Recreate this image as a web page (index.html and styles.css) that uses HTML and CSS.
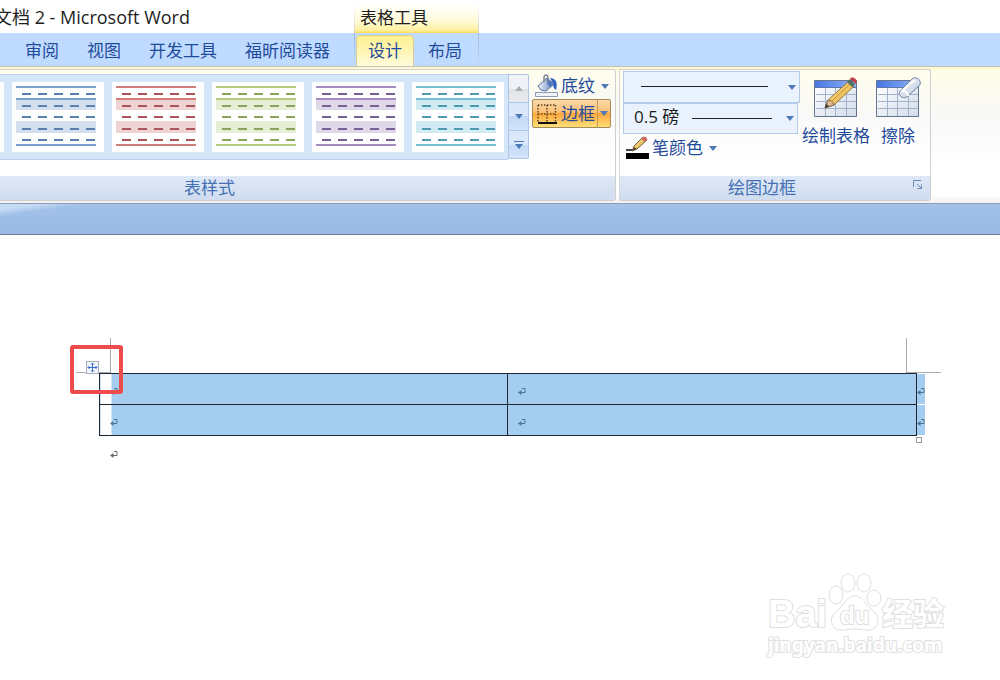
FILE: index.html
```html
<!DOCTYPE html>
<html lang="zh-CN">
<head>
  <meta charset="UTF-8" />
  <meta name="viewport" content="width=device-width, initial-scale=1.0" />
  <title>文档 2 - Microsoft Word</title>
  <link rel="stylesheet" href="styles.css">
</head>
<body>
  <header class="top">
    <h1 class="doc-title"><span>文档 2 - Microsoft Word</span></h1>
    <div class="context-title">表格工具</div>
    <nav class="tabs">
      <button class="tab">审阅</button>
      <button class="tab">视图</button>
      <button class="tab">开发工具</button>
      <button class="tab">福昕阅读器</button>
    </nav>
    <nav class="context-tabs">
      <button class="tab active">设计</button>
      <button class="tab">布局</button>
    </nav>
  </header>

  <svg class="defs" width="0" height="0" aria-hidden="true">
    <defs>
      <linearGradient id="head" x1="0" x2="1"><stop offset="0" stop-color="#4a77e0"/><stop offset="1" stop-color="#8db4fb"/></linearGradient>
      <linearGradient id="cell" x1="0" y1="0" x2="1" y2="1"><stop offset="0" stop-color="#fff"/><stop offset="1" stop-color="#d3dcea"/></linearGradient>
      <linearGradient id="pencil" x1="0" y1="0" x2="1" y2="1"><stop offset="0" stop-color="#fff0a0"/><stop offset="1" stop-color="#e0a030"/></linearGradient>
      <linearGradient id="rubber" x1="0" y1="0" x2="1" y2="1"><stop offset="0" stop-color="#fff"/><stop offset="1" stop-color="#b4c3dc"/></linearGradient>
      <linearGradient id="bucket" x1="0" x2="1"><stop offset="0" stop-color="#f4f8ff"/><stop offset="1" stop-color="#5f7db8"/></linearGradient>
    </defs>
    <symbol id="style" viewBox="0 0 92 70">
      <path class="band" d="M4 17h80v11H4zM4 39h80v12H4z"/>
      <path class="rule" d="M4 5h80M4 63h80" stroke-width="2"/>
      <path class="rule" d="M4 17h80" stroke-width="2"/>
      <path class="dash" d="M10 12h76M10 24h76M10 35h76M10 47h76M10 58h76" stroke-width="2" stroke-dasharray="9 7"/>
    </symbol>
    <symbol id="grid" viewBox="0 0 46 42">
      <path d="M2 4h42v36H2z" fill="url(#cell)"/>
      <path d="M2 4h42v6H2z" fill="url(#head)"/>
      <path d="M3 17.500h40M3 24.500h40M3 31.500h40M12.500 10v29M22.500 10v29M33.500 10v29" stroke="#a3b1c9" fill="none"/>
      <path d="M1.500 3.500h42v36h-42z" fill="none" stroke="#66758f"/>
      <path d="M2 10.500h41" stroke="#5b78b5"/>
    </symbol>
    <symbol id="down" viewBox="0 0 8 5"><path d="M0 0h8L4 5z"/></symbol>
    <symbol id="mark" viewBox="0 0 8 8"><path d="M4 .5h3v4H1" fill="none" stroke="currentColor"/><path d="M0 4.500L3.500 2v5z" fill="currentColor"/></symbol>
  </svg>

  <main>
    <div class="ribbon">
      <section class="group">
        <div class="group-body">
          <div class="gallery">
            <button class="style-item blue" aria-label="样式 1"><svg><use href="#style"/></svg></button>
            <button class="style-item blue" aria-label="样式 2"><svg><use href="#style"/></svg></button>
            <button class="style-item red" aria-label="样式 3"><svg><use href="#style"/></svg></button>
            <button class="style-item green" aria-label="样式 4"><svg><use href="#style"/></svg></button>
            <button class="style-item purple" aria-label="样式 5"><svg><use href="#style"/></svg></button>
            <button class="style-item teal" aria-label="样式 6"><svg><use href="#style"/></svg></button>
          </div>
          <div class="scroller">
            <button class="off" aria-label="上一行"><svg width="8" height="5"><path d="M0 5h8L4 0z"/></svg></button>
            <button aria-label="下一行"><svg width="8" height="5"><use href="#down"/></svg></button>
            <button aria-label="其他"><svg width="10" height="8"><path d="M0 0h10v1H0zM1 3h8L5 8z"/></svg></button>
          </div>
          <div class="commands">
            <button class="cmd">
              <svg width="24" height="24" viewBox="0 0 24 24">
                <path d="M.5 18.500h22v4H.500z" fill="#eef3fb" stroke="#8d9bb5"/>
                <path d="M15 4c6 0 8 5 6 12-2-1-3-3-3-7z" fill="#2f62c4"/>
                <path d="M3 12 12 4l7 6-8 7-5-1z" fill="url(#bucket)" stroke="#5a6f9d"/>
                <path d="M12 4l7 6-4 3c-3-2-4-5-3-9z" fill="#5479bd"/>
                <path d="M9 8V4c0-4 4-4 4 0v5" fill="none" stroke="#7b8798" stroke-width="1.500"/>
              </svg>
              <span>底纹</span>
              <svg class="arrow"><use href="#down"/></svg>
            </button>
            <button class="cmd pressed">
              <svg width="24" height="24" viewBox="0 0 24 24">
                <path d="M3 3h18M3 12h18M3 3v17M12 3v17M20.500 3v17" fill="none" stroke="#5f4a2c" stroke-width="1.500" stroke-dasharray="1.500 1.500"/>
                <path d="M3 21h19" stroke="#111" stroke-width="2"/>
              </svg>
              <span>边框</span>
              <svg class="arrow"><use href="#down"/></svg>
            </button>
          </div>
        </div>
        <h2 class="group-name">表样式</h2>
      </section>

      <section class="group">
        <div class="group-body pens">
          <div class="pen-settings">
            <div class="combo line-style">
              <select aria-label="笔样式"><option></option></select>
              <svg class="arrow"><use href="#down"/></svg>
            </div>
            <div class="combo line-width">
              <select aria-label="笔划粗细"><option>0.5 磅</option></select>
              <svg class="arrow"><use href="#down"/></svg>
            </div>
            <button class="cmd">
              <svg width="24" height="24" viewBox="0 0 24 24">
                <path d="M0 17h23v6H0z" fill="#000"/>
                <path d="M0 14h6" stroke="#444" stroke-width="2"/>
                <path d="M6 15l2-5L17 1l4 3-10 9z" fill="url(#pencil)" stroke="#716443"/>
                <path d="M15 3l2-2c2-1 5 1 4 3l-2 2z" fill="#cf6a60"/>
                <path d="M6 15l2-4 3 2z" fill="#554a3a"/>
              </svg>
              <span>笔颜色</span>
              <svg class="arrow"><use href="#down"/></svg>
            </button>
          </div>
          <button class="big">
            <svg width="46" height="42" viewBox="0 0 46 42">
              <use href="#grid"/>
              <path d="M12 31l3-8L36 4l5 5-20 19z" fill="url(#pencil)" stroke="#97703a"/>
              <path d="M12 31l3-8c3 0 5 2 6 5z" fill="#dfb893" stroke="#85694c"/>
              <path d="M12 31l1-4 3 2z" fill="#333"/>
              <path d="M18 25L38 6" stroke="#c98c2c"/>
              <path d="M34 5l3-3 5 5-3 3z" fill="#536f68"/>
              <path d="M37 2c2-4 9 1 6 5z" fill="#c7404c"/>
            </svg>
            <span>绘制表格</span>
          </button>
          <button class="big">
            <svg width="46" height="42" viewBox="0 0 46 42">
              <use href="#grid"/>
              <path d="M25 14L37 2c3-3 10 0 8 6L33 19c-4 4-11 0-8-5z" fill="url(#rubber)" stroke="#7386a8"/>
              <path d="M26 14c4-1 7 2 7 5M28 13L40 3" fill="none" stroke="#fff" stroke-width="2"/>
            </svg>
            <span>擦除</span>
          </button>
        </div>
        <h2 class="group-name">绘图边框
          <button class="launcher" aria-label="边框和底纹">
            <svg width="10" height="10"><path d="M.5 7V.500H8M4 4l4 4M8.500 4.500v4h-4" fill="none" stroke="#6488b8"/></svg>
          </button>
        </h2>
      </section>
    </div>

    <div class="desk"></div>

    <article class="page">
      <div class="corners">
        <i class="corner left"></i>
        <i class="corner right"></i>
      </div>
      <div class="table-wrap">
        <table>
          <tr>
            <td class="first"><svg><use href="#mark"/></svg></td>
            <td><svg><use href="#mark"/></svg></td>
            <td class="row-end"><svg><use href="#mark"/></svg></td>
          </tr>
          <tr>
            <td class="first"><svg><use href="#mark"/></svg></td>
            <td><svg><use href="#mark"/></svg></td>
            <td class="row-end"><svg><use href="#mark"/></svg></td>
          </tr>
        </table>
        <button class="move" aria-label="移动表格">
          <svg width="11" height="11"><path d="M5.500 1v9M1 5.500h9M4 2.500l1.500-1.500L7 2.500M4 8.500L5.500 10 7 8.500M2.500 4L1 5.500 2.500 7M8.500 4L10 5.500 8.500 7" fill="none" stroke="#3d6bd0"/></svg>
        </button>
        <i class="resize"></i>
        <i class="highlight"></i>
      </div>
      <p class="after"><svg><use href="#mark"/></svg></p>

      <svg class="watermark" width="190" height="96" viewBox="0 0 190 96">
        <g class="outline">
          <text class="bai" x="6" y="62">Bai</text>
          <text class="cjk" x="120" y="60">经验</text>
          <ellipse cx="74" cy="30" rx="7" ry="9"/>
          <ellipse cx="86" cy="18" rx="7" ry="9"/>
          <ellipse cx="102" cy="18" rx="7" ry="9"/>
          <ellipse cx="112" cy="33" rx="7" ry="8"/>
          <path d="M93 31c7 0 10 7 16 13 6 5 9 10 6 16-4 8-13 4-22 4s-17 4-22-3c-4-7 0-12 6-17 6-6 9-13 16-13z"/>
          <text class="du" x="78" y="59">du</text>
          <text class="url" x="6" y="87">jingyan.baidu.com</text>
        </g>
      </svg>
    </article>
  </main>
</body>
</html>
```
FILE: styles.css
```css
* { box-sizing: border-box; }
body { margin: 0; min-height: 100vh; background: #fff; color: #1e1e1e; font-family: "Open Sans", "Noto Sans CJK SC", sans-serif; font-size: 17px; line-height: 24px; overflow-x: hidden; }
h1, h2, p { margin: 0; font-size: 17px; font-weight: normal; }
button { margin: 0; padding: 0; border: none; background: none; color: #1f4b9b; font: inherit; cursor: pointer; }
svg { display: block; flex: none; }
.defs { position: absolute; }
.arrow { width: 8px; height: 5px; fill: #4c79b8; }

/* title bar and tabs */
.top { display: grid; grid-template-columns: 354px 125px 1fr; grid-template-rows: 33px 33px; background: linear-gradient(#fff 33px, #bfdbff 33px); }
.doc-title { display: flex; justify-content: flex-end; align-items: center; width: 190px; overflow: hidden; font-size: 18px; white-space: nowrap; }
.context-title { display: flex; align-items: center; margin-top: 4px; padding: 0 5px 2px; border: 1px solid; border-width: 0 1px; border-image: linear-gradient(#fff, #d5d5cc) 1; background: linear-gradient(#fff, #fffad6 60%, #fff0a0 90%, #ffdc50); }
.tabs { grid-area: 2 / 1; display: flex; padding-left: 11px; }
.context-tabs { grid-area: 2 / 2; display: flex; padding-left: 1px; border: 1px solid; border-width: 0 1px; border-image: linear-gradient(#9fb6d6, #bfdbff) 1; }
.tab { padding: 2px 14px 0; white-space: nowrap; }
.tab.active { margin-top: 2px; padding: 0 11px; border: 1px solid #d9cf94; border-bottom: none; border-radius: 4px 4px 0 0; background: linear-gradient(#fff08c, #fffbdc); }

/* ribbon */
.ribbon { display: flex; gap: 3px; padding: 2px 0; border-top: 1px solid #bfc3bd; background: linear-gradient(#fff6c8, #fffce8 4px, #f8f8f7 50px, #fff 100px, #fff 128px, #f1f1f1); }
.group { display: flex; flex-direction: column; border: 1px solid #cfcfd2; border-left-color: #d8d8da; border-radius: 0 3px 3px 0; background: linear-gradient(#fffdec, #f9f9f8 45px, #fff 90px); }
.group:first-child { border-left: none; }
.group-body { display: flex; height: 106px; padding: 4px 4px 0 0; }
.group-name { display: flex; justify-content: center; align-items: center; position: relative; height: 24px; background: linear-gradient(#dfe8f6, #d0dcef); color: #4471b3; }
.group:first-child .group-name { padding-right: 196px; }
.group + .group .group-name { padding-right: 26px; }
.launcher { position: absolute; right: 7px; top: 4px; }

.gallery { display: flex; justify-content: flex-end; align-items: center; gap: 8px; width: 508px; height: 86px; padding-right: 4px; border: 1px solid #b9cfee; border-width: 1px 0; background: #d5e6f9; overflow: hidden; }
.style-item { flex: none; background: #fff; }
.style-item svg { width: 92px; height: 70px; fill: none; }
.rule { stroke: var(--rule); }
.dash { stroke: var(--dash); }
.band { fill: var(--band); }
.blue { --rule: #7ba0d0; --dash: #5b80b2; --band: #d3dfee; }
.red { --rule: #d07a7a; --dash: #ac5457; --band: #efd3d2; }
.green { --rule: #b3cc7d; --dash: #8ba35a; --band: #e6eed5; }
.purple { --rule: #a48cc0; --dash: #786095; --band: #dfd8e8; }
.teal { --rule: #78bfd0; --dash: #4f9aae; --band: #d2eaf1; }

.scroller { display: flex; flex-direction: column; width: 21px; height: 85px; border: 1px solid #adc5e7; border-radius: 0 2px 2px 0; }
.scroller button { display: grid; place-items: center; flex: 1; background: linear-gradient(#dbe8fb 50%, #c3d8f6 50%, #d4e4fa); fill: #4c79b8; }
.scroller button + button { border-top: 1px solid #adc5e7; }
.scroller .off { background: linear-gradient(#eef1f5 50%, #e0e3e7 50%, #e9ebee); fill: #a9adb3; }

.commands { margin-left: 3px; }
.cmd { display: flex; align-items: center; gap: 2px; height: 28px; padding-left: 3px; white-space: nowrap; }
.commands .cmd { width: 79px; }
.cmd .arrow { margin-left: 4px; }
.commands .cmd:first-child { height: 24px; }
.commands .pressed { height: 29px; margin-top: 1px; padding-left: 2px; border: 1px solid #a58a5c; border-radius: 2px; background: linear-gradient(#f9d9a8, #fdc077 45%, #fda63b 50%, #fee079); }
.pressed .arrow { box-sizing: content-box; margin-left: 0; padding: 11px 2px; border-left: 1px solid #c39a58; }

.pens { padding: 1px 6px 0 3px; }
.pen-settings { width: 177px; }
.combo { display: grid; align-items: center; }
.combo select, .combo .arrow { grid-area: 1 / 1; }
.combo .arrow { justify-self: end; margin-right: 4px; pointer-events: none; }
.combo select { appearance: none; width: 100%; height: 32px; padding: 0 10px; border: 1px solid #b3cbe8; border-radius: 0; background: linear-gradient(#222, #222) 17px 14px / 127px 1px no-repeat #eaf3fd; color: #1e1e1e; font: inherit; }
.line-width { margin-right: 2px; }
.combo.line-width select { height: 31px; padding-bottom: 3px; background-position: 68px 14px; background-size: 80px 1px; }
.big { display: flex; flex-direction: column; align-items: center; gap: 5px; height: 72px; margin-top: 6px; padding: 0 2px; white-space: nowrap; }
.big + .big { padding: 0 3px; }

.desk { height: 32px; border: 1px solid #8e9db5; border-bottom: 1px solid #6f7f99; border-width: 1px 0 1px; background: linear-gradient(172deg, #c4daf5 6px, #a3c2ea00 12px) 0 0 / 80px 14px no-repeat, linear-gradient(#a3c2ea, #9bbae4); }

/* document */
.page { padding: 103px 75px 0 76px; }
.corners { display: flex; justify-content: space-between; margin-right: -16px; }
.corner { width: 35px; height: 35px; border: solid #adadad; }
.corner.left { border-width: 0 1px 1px 0; }
.corner.right { border-width: 0 0 1px 1px; }
.table-wrap { position: relative; margin-left: 23px; }
table { width: 100%; border-collapse: collapse; table-layout: fixed; }
td { height: 31px; padding: 6px 0 0 10px; border: 1px solid #1c2733; background: #a4cdf0; color: #4d7596; }
td svg, .after svg { width: 8px; height: 8px; }
td.first { background: linear-gradient(90deg, #fff 11px, #a4cdf0 11px); }
td.row-end { width: 9px; padding-left: 0; border: none; border-bottom: 1px solid #fff; border-left: 1px solid #1c2733; }
.move { display: grid; place-items: center; position: absolute; left: -13px; top: -12px; width: 13px; height: 13px; border: 1px solid #a9b0bb; background: #f2f5fa; }
.resize { position: absolute; right: 3px; bottom: -7px; width: 6px; height: 6px; border: 1px solid #999; background: #fff; }
.highlight { position: absolute; left: -29px; top: -28px; width: 53px; height: 49px; border: 4px solid #ee4b4d; border-radius: 3px; pointer-events: none; }
.after { padding: 15px 0 0 34px; color: #666; }

.watermark { position: absolute; right: 48px; top: 565px; }
.outline { fill: #fff; stroke: #e0e0e0; stroke-width: 1; }
.outline text { font-weight: bold; stroke-width: 2; paint-order: stroke; }
.outline .bai { font-family: "Liberation Sans", sans-serif; font-size: 38px; }
.outline .du { font-family: "Liberation Sans", sans-serif; font-size: 24px; }
.outline .cjk { font-family: "Noto Sans CJK SC", sans-serif; font-size: 31px; }
.outline .url { font-family: "Noto Sans", sans-serif; font-size: 19px; }
```
